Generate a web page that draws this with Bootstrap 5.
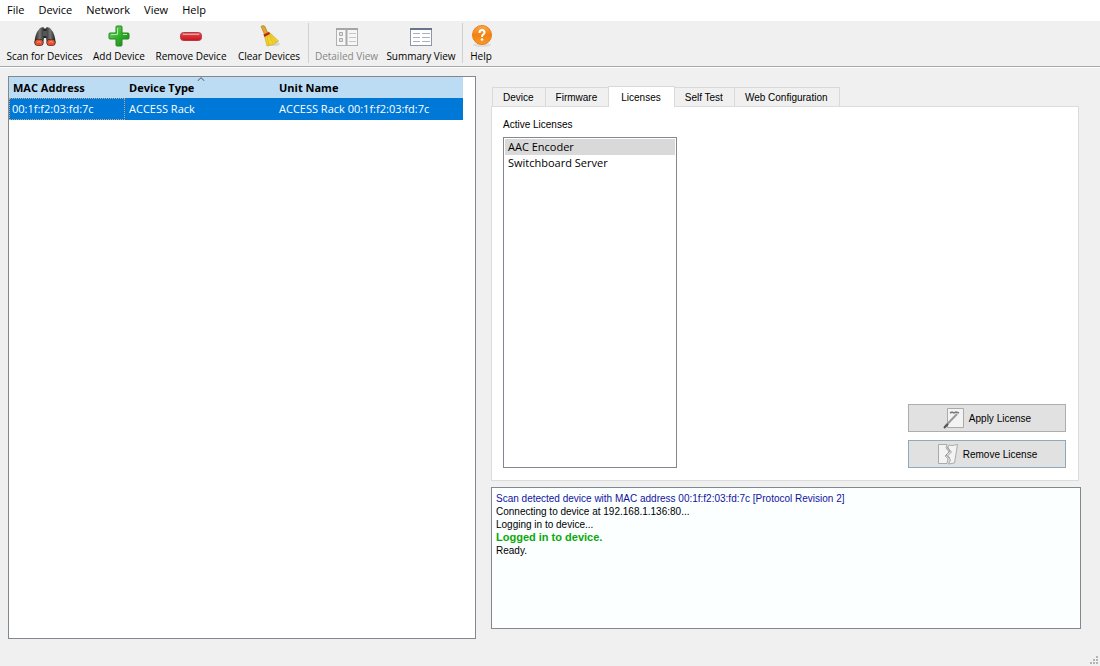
<!DOCTYPE html>
<html lang="en">
<head>
<meta charset="utf-8">
<meta name="viewport" content="width=device-width, initial-scale=1">
<title>Device Manager</title>
<link href="https://cdn.jsdelivr.net/npm/bootstrap@5.3.0/dist/css/bootstrap.min.css" rel="stylesheet">
<style>
  :root { --ui: "Open Sans", "Noto Sans", sans-serif; --form: "Liberation Sans", Arial, sans-serif; }
  body { font: 11px/16px var(--ui); color: #000; background: #f0f0f0; }
  .menu-strip { height: 21px; }
  .menu-strip .nav-link { padding: 2px 7px; color: #000; font-size: 11px; line-height: 16px; }
  .tool-strip { height: 46px; padding: 2px 1px 0; border-bottom: 1px solid #a8a8a8; box-shadow: 0 1px #fff; }
  .tool-btn { width: var(--w); padding: 1px 0 0; border: 0; border-radius: 0; color: #000; font-size: 10px; line-height: 16px; white-space: nowrap; }
  .tool-btn:disabled { color: #868686; border: 0; opacity: 1; }
  .tool-btn svg { width: 24px; height: 24px; }
  .tool-sep { width: 1px; height: 40px; margin: 0 2px; background: #d0d0d0; }
  .work-area { display: grid; grid-template-columns: 468fr 590fr; padding: 9px 19px 27px 8px; gap: 15px; }
  .device-pane { border: 1px solid #828790; padding-right: 12px; background: #fff; min-width: 0; }
  .detail-pane { display: grid; grid-template-rows: 20px 375fr 148fr; min-width: 0; padding: 10px 0; }
  .device-table { table-layout: fixed; margin: 0; border-collapse: separate; border-spacing: 0; font-size: 11px; line-height: 16px; }
  .device-table th { position: relative; background: #bcdcf4; border: 0; padding: 3px 4px 2px 4px; color: #000; height: 21px; }
  .device-table td { background: #0078d7; color: #fff; border: 1px solid #0078d7; padding: 2px 3px; height: 22px; }
  .device-table td.focused { border: 1px dotted #c4a882; padding-left: 2px; }
  .sort-mark { position: absolute; top: 0; left: 72px; width: 8px; height: 4px; }
  .page-tabs { font-family: var(--form); padding-left: 2px; border: 0; align-items: flex-end; }
  .page-tabs .nav-link { height: 19px; padding: 2px 11px 0 10px; margin: 0 0 0 -1px; border: 1px solid #d9d9d9; border-bottom: 0; border-radius: 0; background: #f0f0f0; color: #000; font-size: 10px; line-height: 16px; }
  .page-tabs .nav-link.active { position: relative; height: 21px; padding: 2px 13px 0 12px; margin-bottom: -1px; background: #fff; color: #000; border-color: #d9d9d9; }
  .page-body { margin-right: 2px; font-family: var(--form); font-size: 10px; border: 1px solid #dcdcdc; background: #fff; padding: 10px 12px 12px 11px; }
  .license-box { width: 174px; margin-top: 4px; padding: 1px; border: 1px solid #828790; border-radius: 0; font-family: var(--ui); }
  .license-box .list-group-item { padding: 0 3px; border: 0; background: #fff; color: #000; font-size: 11px; line-height: 16px; border-radius: 0; }
  .license-box .list-group-item.active { background: #d9d9d9; }
  .action-btn { width: 158px; height: 28px; padding: 0; gap: 4px; border: 1px solid #adadad; border-radius: 0; background: #e1e1e1; color: #000; font-size: 10px; }
  .action-btn.hot { border-color: #8fa9bd; }
  .action-btn svg { width: 22px; height: 24px; }
  .log-box { margin-top: 6px; padding: 4px; border: 1px solid #828790; background: #fbffff; font-family: var(--form); font-size: 10px; line-height: 13px; }
  .log-blue { color: #1212a0; }
  .log-green { color: #0aa80a; font-size: 11px; }
  .grip { position: absolute; right: 2px; bottom: 2px; width: 8px; height: 8px; }
</style>
</head>
<body>
<div class="d-flex flex-column min-vh-100 position-relative">
  <nav class="menu-strip nav bg-white flex-nowrap" aria-label="Main menu">
    <a class="nav-link" href="#">File</a>
    <a class="nav-link" href="#">Device</a>
    <a class="nav-link" href="#">Network</a>
    <a class="nav-link" href="#">View</a>
    <a class="nav-link" href="#">Help</a>
  </nav>

  <div class="tool-strip d-flex" role="toolbar" aria-label="Device tools">
    <button type="button" class="tool-btn btn d-flex flex-column align-items-center" style="--w:87px">
      <svg viewBox="0 0 24 24" aria-hidden="true">
        <defs><linearGradient id="bar" x2="1"><stop stop-color="#222"/><stop offset=".5" stop-color="#777"/><stop offset="1" stop-color="#1c1c1c"/></linearGradient></defs>
        <path d="M7 4l3-1 2 2v9l-2 5-8 1c-1-3 0-7 2-12z" fill="url(#bar)"/>
        <path d="M17 4l-3-1-2 2v9l2 5 8 1c1-3 0-7-2-12z" fill="url(#bar)"/>
        <path d="M10 7h4v5h-4z" fill="#555"/><path d="M11 14h2l1 6h-4z" fill="#f0f0f0"/>
        <ellipse cx="6" cy="18.500" rx="4.600" ry="3.500" fill="#2a2020"/><ellipse cx="18" cy="18.500" rx="4.600" ry="3.500" fill="#2a2020"/>
        <ellipse cx="6" cy="18.500" rx="3.900" ry="2.900" fill="#e8502c"/><ellipse cx="18" cy="18.500" rx="3.900" ry="2.900" fill="#e8502c"/>
        <path d="M4 18.500q2-2 4 0M16 18.500q2-2 4 0" stroke="#ff9d7c" fill="none"/>
      </svg>Scan for Devices</button>
    <button type="button" class="tool-btn btn d-flex flex-column align-items-center" style="--w:62px">
      <svg viewBox="0 0 24 24" aria-hidden="true">
        <defs><linearGradient id="gr" y2="1" x2="1"><stop stop-color="#7fdc74"/><stop offset=".5" stop-color="#35b02d"/><stop offset="1" stop-color="#158316"/></linearGradient></defs>
        <path d="M10 2h4q1 0 1 1v6h6q1 0 1 1v4q0 1-1 1h-6v6q0 1-1 1h-4q-1 0-1-1v-6H3q-1 0-1-1v-4q0-1 1-1h6V3q0-1 1-1z" fill="url(#gr)" stroke="#24861f"/>
        <path d="M10.500 4v6.500H4M16 10.500h4" fill="none" stroke="#a6efa0"/>
      </svg>Add Device</button>
    <button type="button" class="tool-btn btn d-flex flex-column align-items-center" style="--w:82px">
      <svg viewBox="0 0 24 24" aria-hidden="true">
        <defs><linearGradient id="rd" x2="0" y2="1"><stop stop-color="#d98787"/><stop offset=".35" stop-color="#d93840"/><stop offset="1" stop-color="#cf1019"/></linearGradient></defs>
        <rect x="1.500" y="8.500" width="21" height="8" rx="3" fill="url(#rd)" stroke="#b43a40"/>
        <path d="M4 10.500h16" stroke="#ed9da0"/>
      </svg>Remove Device</button>
    <button type="button" class="tool-btn btn d-flex flex-column align-items-center" style="--w:74px">
      <svg viewBox="0 0 24 24" aria-hidden="true">
        <ellipse cx="17" cy="20" rx="6" ry="2" fill="#d6d6d6"/>
        <path d="M4 2.500q2-2 4 0l3 7-3 2z" fill="#e3a62e" stroke="#a5741a" stroke-width=".6"/>
        <path d="M7 10l5-2 9.500 9q-4 4-11.500 5z" fill="#f4d52e" stroke="#c39a1b" stroke-width=".6"/>
        <path d="M10 12l2 9M12 11l4 8M13 11l6 7" stroke="#d9b426" stroke-width=".8"/>
        <path d="M6.500 10.500l5.500-2.500 1 2-5.500 3z" fill="#b5281e"/>
      </svg>Clear Devices</button>
    <span class="tool-sep"></span>
    <button type="button" class="tool-btn btn d-flex flex-column align-items-center" style="--w:71px" disabled>
      <svg viewBox="0 0 24 24" aria-hidden="true">
        <rect x="1.500" y="4.500" width="21" height="17" fill="#f6f6f6" stroke="#b0b0b0"/><path d="M1 5h22" stroke="#a5a5a5" stroke-width="2"/>
        <path d="M11.500 5v16" stroke="#aaa" stroke-width="2"/>
        <path d="M4.500 8.500h3v3h-3zM4.500 14.500h3v3h-3z" fill="#e4e4e4" stroke="#a8a8a8"/><path d="M14 9.500h7M14 13.500h7M14 17.500h7" stroke="#c6c6c6"/>
      </svg>Detailed View</button>
    <button type="button" class="tool-btn btn d-flex flex-column align-items-center" style="--w:78px">
      <svg viewBox="0 0 24 24" aria-hidden="true">
        <rect x="1.500" y="4.500" width="21" height="17" fill="#fff" stroke="#8c96a8"/><path d="M1 5h22" stroke="#66748c" stroke-width="2"/>
        <path d="M4 9.500h7M13 9.500h8M4 13.500h7M13 13.500h8M4 17.500h7M13 17.500h8" stroke="#a9b0be"/>
      </svg>Summary View</button>
    <span class="tool-sep"></span>
    <button type="button" class="tool-btn btn d-flex flex-column align-items-center" style="--w:32px">
      <svg viewBox="0 0 24 24" aria-hidden="true">
        <defs><linearGradient id="or" x2="0" y2="1"><stop stop-color="#f9ab4e"/><stop offset=".5" stop-color="#f38010"/><stop offset="1" stop-color="#f79b2e"/></linearGradient></defs>
        <ellipse cx="13" cy="21" rx="9" ry="2" fill="#ddd"/>
        <circle cx="13" cy="11" r="9.500" fill="url(#or)" stroke="#ec7b12"/>
        <path d="M10.500 9q0-3 2.500-3t2.500 2.500q0 1.500-1.500 2.200-1 .6-1 2.300" fill="none" stroke="#fff" stroke-width="2"/><circle cx="13" cy="15.500" r="1.300" fill="#fff"/>
      </svg>Help</button>
  </div>

  <main class="work-area flex-grow-1">
    <section class="device-pane" aria-label="Devices">
      <table class="device-table table">
        <colgroup><col style="width:116px"><col style="width:150px"><col></colgroup>
        <thead><tr><th scope="col">MAC Address</th><th scope="col">Device Type
          <svg class="sort-mark" viewBox="0 0 8 4" aria-hidden="true"><path d="M.5 4L4 .7 7.500 4" fill="none" stroke="#555"/></svg></th><th scope="col">Unit Name</th></tr></thead>
        <tbody><tr><td class="focused">00:1f:f2:03:fd:7c</td><td>ACCESS Rack</td><td>ACCESS Rack 00:1f:f2:03:fd:7c</td></tr></tbody>
      </table>
    </section>

    <section class="detail-pane">
      <div class="page-tabs nav nav-tabs" role="tablist">
        <button type="button" class="nav-link" role="tab">Device</button>
        <button type="button" class="nav-link" role="tab">Firmware</button>
        <button type="button" class="nav-link active" role="tab" aria-selected="true">Licenses</button>
        <button type="button" class="nav-link" role="tab">Self Test</button>
        <button type="button" class="nav-link" role="tab">Web Configuration</button>
      </div>
      <div class="page-body d-flex justify-content-between" role="tabpanel">
        <div class="d-flex flex-column">
          <span id="active-licenses">Active Licenses</span>
          <div class="license-box list-group flex-grow-1" aria-labelledby="active-licenses">
            <button type="button" class="list-group-item list-group-item-action active">AAC Encoder</button>
            <button type="button" class="list-group-item list-group-item-action">Switchboard Server</button>
          </div>
        </div>
        <div class="d-flex flex-column justify-content-end gap-2">
          <button type="button" class="action-btn btn d-flex align-items-center justify-content-center">
            <svg viewBox="0 0 22 24" aria-hidden="true"><path d="M4.500 2.500h16v19h-16z" fill="#f3f3f3" stroke="#aaa"/><path d="M7 7l2-1 2 1 2-1 3 1" fill="none" stroke="#777" stroke-width="1.500"/><path d="M1.500 21L14 8" stroke="#999" stroke-width="2"/><path d="M1 22l4-4" stroke="#555" stroke-width="2"/></svg>
            Apply License</button>
          <button type="button" class="action-btn hot btn d-flex align-items-center justify-content-center">
            <svg viewBox="0 0 22 24" aria-hidden="true"><path d="M1.500 2.500H10L9 6l3 4-4 4 3 3-1 4.500H1.500z" fill="#f3f3f3" stroke="#aaa"/><path d="M12 3l3 .5 5.500-1-3 18.500-6 1 2-4-3-4 4-4-4-4z" fill="#f3f3f3" stroke="#aaa"/><path d="M10.500 5l2.500 4-4 4 4 3" fill="none" stroke="#999"/></svg>
            Remove License</button>
        </div>
      </div>
      <div class="log-box" role="log">
        <div class="log-blue">Scan detected device with MAC address 00:1f:f2:03:fd:7c [Protocol Revision 2]</div>
        <div>Connecting to device at 192.168.1.136:80...</div>
        <div>Logging in to device...</div>
        <div class="log-green fw-bold">Logged in to device.</div>
        <div>Ready.</div>
      </div>
    </section>
  </main>
  <svg class="grip" viewBox="0 0 8 8" aria-hidden="true"><path d="M6 0h2v2H6zM3 3h2v2H3zM6 3h2v2H6zM0 6h2v2H0zM3 6h2v2H3zM6 6h2v2H6z" fill="#b4b4b4"/></svg>
</div>
<script src="https://cdn.jsdelivr.net/npm/bootstrap@5.3.0/dist/js/bootstrap.bundle.min.js"></script>
</body>
</html>
